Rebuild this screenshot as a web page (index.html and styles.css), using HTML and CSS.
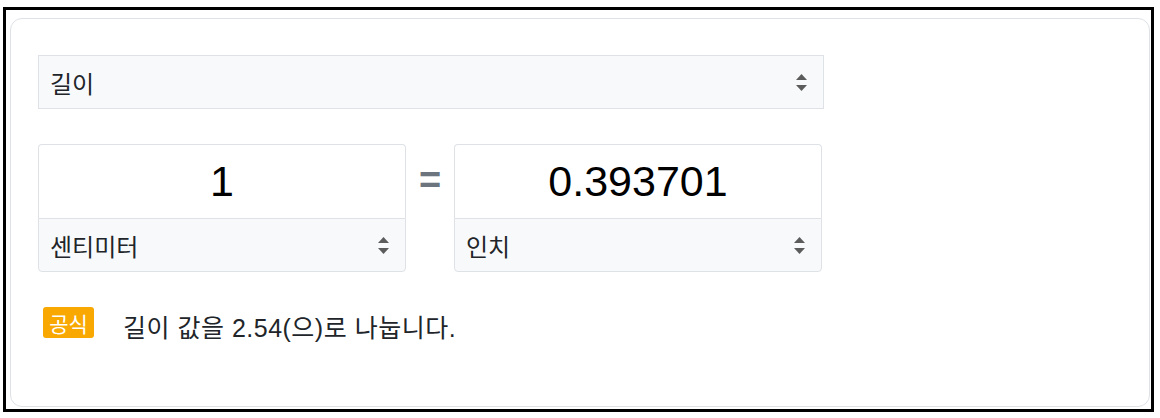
FILE: index.html
```html
<!DOCTYPE html>
<html lang="ko">
<head>
  <meta charset="UTF-8" />
  <meta name="viewport" content="width=device-width, initial-scale=1" />
  <title>길이 변환기</title>
  <link rel="stylesheet" href="styles.css">
</head>
<body>
  <div class="frame">
    <div class="card">
      <div class="select select-wide">
        <span>길이</span>
        <svg class="arrows" width="11" height="17" viewBox="0 0 11 17" aria-hidden="true">
          <polygon points="5.5,0 11,6 0,6" />
          <polygon points="0,11 11,11 5.5,17" />
        </svg>
      </div>

      <div class="converter">
        <div class="unit-group">
          <div class="value">1</div>
          <div class="select select-unit">
            <span>센티미터</span>
            <svg class="arrows" width="11" height="17" viewBox="0 0 11 17" aria-hidden="true">
              <polygon points="5.5,0 11,6 0,6" />
              <polygon points="0,11 11,11 5.5,17" />
            </svg>
          </div>
        </div>

        <div class="equals">=</div>

        <div class="unit-group">
          <div class="value">0.393701</div>
          <div class="select select-unit">
            <span>인치</span>
            <svg class="arrows" width="11" height="17" viewBox="0 0 11 17" aria-hidden="true">
              <polygon points="5.5,0 11,6 0,6" />
              <polygon points="0,11 11,11 5.5,17" />
            </svg>
          </div>
        </div>
      </div>

      <div class="formula">
        <span class="badge">공식</span>
        <span class="formula-text">길이 값을 2.54(으)로 나눕니다.</span>
      </div>
    </div>
  </div>
</body>
</html>
```

FILE: styles.css
```css
:root {
  --text: #212529;
  --muted: #6c757d;
  --line: #dee2e6;
  --field-bg: #f8f9fa;
  --badge: #f8a800;
  --font-family: "Liberation Sans", "Noto Sans CJK KR", sans-serif;
}

* {
  box-sizing: border-box;
}

body {
  margin: 0;
  background: #fff;
  color: var(--text);
  font-family: var(--font-family);
}

.frame {
  margin: 7px 6px 6px 3px;
  height: 405px;
  border: 3px solid #000;
  padding: 8px 1px 2px 4px;
}

.card {
  height: 100%;
  border: 1px solid var(--line);
  border-radius: 12px;
  padding: 36px 27px;
}

.select {
  display: flex;
  align-items: center;
  justify-content: space-between;
  background: var(--field-bg);
  border: 1px solid var(--line);
  padding: 0 16px 0 11px;
  font-size: 24px;
}

.arrows {
  fill: #5c5c5c;
}

.select-wide {
  width: 786px;
  height: 54px;
}

.converter {
  display: flex;
  align-items: flex-start;
  margin-top: 35px;
}

.unit-group {
  width: 368px;
}

.value {
  height: 74px;
  display: flex;
  align-items: center;
  justify-content: center;
  border: 1px solid var(--line);
  border-bottom: none;
  border-radius: 4px 4px 0 0;
  font-size: 43px;
  color: #000;
}

.select-unit {
  height: 54px;
  border-radius: 0 0 4px 4px;
}

.equals {
  width: 48px;
  padding-top: 15px;
  text-align: center;
  font-size: 38px;
  font-weight: 700;
  color: var(--muted);
}

.formula {
  display: flex;
  align-items: flex-start;
  margin-top: 35px;
  padding-left: 5px;
}

.badge {
  display: inline-flex;
  align-items: center;
  justify-content: center;
  width: 51px;
  height: 31px;
  background: var(--badge);
  color: #fff;
  border-radius: 3px;
  font-size: 21px;
}

.formula-text {
  margin-left: 29px;
  margin-top: 1px;
  font-size: 25px;
  letter-spacing: 0.5px;
}
```
